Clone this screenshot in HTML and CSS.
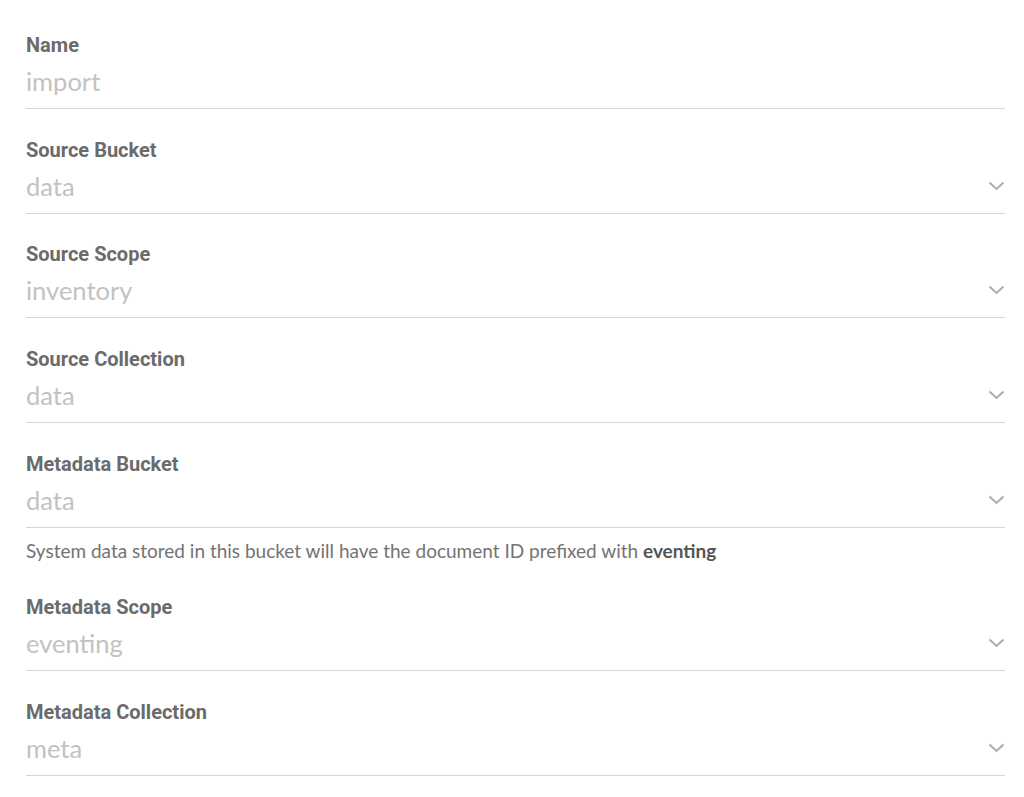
FILE: index.html
```html
<!DOCTYPE html>
<html>
<head>
<meta charset="utf-8">
<link rel="stylesheet" href="styles.css">
</head>
<body>
<form class="form">
  <div class="field">
    <div class="label">Name</div>
    <div class="input"><span class="value">import</span></div>
  </div>
  <div class="field">
    <div class="label">Source Bucket</div>
    <div class="input select"><span class="value">data</span><svg class="chev" viewBox="0 0 17 10"><path d="M1.5 1.5 L8.5 8 L15.5 1.5"/></svg></div>
  </div>
  <div class="field">
    <div class="label">Source Scope</div>
    <div class="input select"><span class="value">inventory</span><svg class="chev" viewBox="0 0 17 10"><path d="M1.5 1.5 L8.5 8 L15.5 1.5"/></svg></div>
  </div>
  <div class="field">
    <div class="label">Source Collection</div>
    <div class="input select"><span class="value">data</span><svg class="chev" viewBox="0 0 17 10"><path d="M1.5 1.5 L8.5 8 L15.5 1.5"/></svg></div>
  </div>
  <div class="field with-help">
    <div class="label">Metadata Bucket</div>
    <div class="input select"><span class="value">data</span><svg class="chev" viewBox="0 0 17 10"><path d="M1.5 1.5 L8.5 8 L15.5 1.5"/></svg></div>
    <p class="help">System data stored in this bucket will have the document ID prefixed with <b>eventing</b></p>
  </div>
  <div class="field">
    <div class="label">Metadata Scope</div>
    <div class="input select"><span class="value">eventing</span><svg class="chev" viewBox="0 0 17 10"><path d="M1.5 1.5 L8.5 8 L15.5 1.5"/></svg></div>
  </div>
  <div class="field">
    <div class="label">Metadata Collection</div>
    <div class="input select"><span class="value">meta</span><svg class="chev" viewBox="0 0 17 10"><path d="M1.5 1.5 L8.5 8 L15.5 1.5"/></svg></div>
  </div>
</form>
</body>
</html>
```
FILE: styles.css
```css
html, body {
  margin: 0;
  padding: 0;
  background: #ffffff;
}
.form {
  padding: 34px 19px 0 26px;
  display: flex;
  flex-direction: column;
  gap: 29.7px;
}
.label {
  font-family: Roboto, "Liberation Sans", sans-serif;
  font-weight: 700;
  font-size: 20px;
  line-height: 22px;
  color: #6b6b6b;
}
.input {
  display: flex;
  align-items: center;
  justify-content: space-between;
  margin-top: 10px;
  padding-bottom: 12px;
  border-bottom: 1px solid #d6d6d6;
}
.value {
  font-family: Lato, "Open Sans", sans-serif;
  font-weight: 400;
  font-size: 25.5px;
  line-height: 30px;
  color: #c2c2c2;
}
.chev {
  width: 17px;
  height: 10px;
  margin-right: 0;
  fill: none;
  stroke: #ababab;
  stroke-width: 1.9;
}
.help {
  margin: 12px 0 0 0;
  font-family: Lato, "Open Sans", sans-serif;
  font-size: 19px;
  line-height: 22px;
  color: #737373;
}
.help b {
  color: #555555;
  font-weight: 700;
}
.with-help + .field {
  margin-top: 5px;
}
```
